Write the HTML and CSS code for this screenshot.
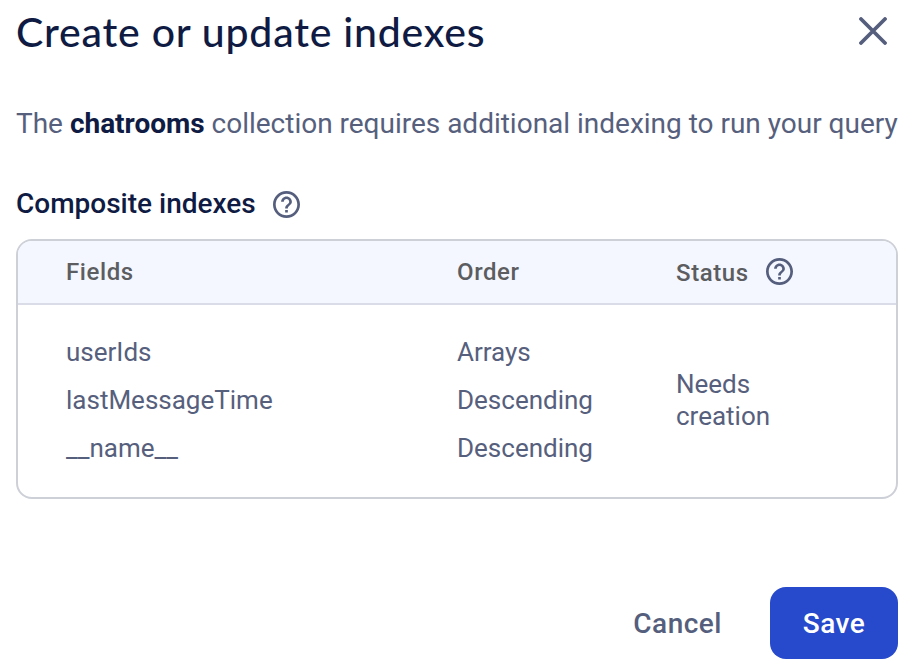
FILE: index.html
```html
<!DOCTYPE html>
<html lang="en">
<head>
<meta charset="utf-8">
<title>Create or update indexes</title>
<link rel="stylesheet" href="styles.css">
</head>
<body>
<main class="dialog">
  <header class="head">
    <h1><span>Create or update indexes</span></h1>
    <svg class="close" viewBox="0 0 28 28"><path d="M2 2l24 24M26 2l-24 24"/></svg>
  </header>
  <p class="intro">The <b>chatrooms</b> collection requires additional indexing to run your query</p>
  <h2><span>Composite indexes</span>
    <svg class="help" viewBox="2 2 20 20"><path d="M11 18h2v-2h-2v2zm1-16C6.480 2 2 6.480 2 12s4.480 10 10 10 10-4.480 10-10S17.520 2 12 2zm0 18c-4.410 0-8-3.590-8-8s3.590-8 8-8 8 3.590 8 8-3.590 8-8 8zm0-14c-2.210 0-4 1.790-4 4h2c0-1.100.9-2 2-2s2 .9 2 2c0 2-3 1.750-3 5h2c0-2.250 3-2.500 3-5 0-2.210-1.790-4-4-4z"/></svg>
  </h2>
  <section class="table">
    <div class="row thead">
      <span>Fields</span><span>Order</span>
      <span class="status-head"><span>Status</span>
        <svg class="help" viewBox="2 2 20 20"><path d="M11 18h2v-2h-2v2zm1-16C6.480 2 2 6.480 2 12s4.480 10 10 10 10-4.480 10-10S17.520 2 12 2zm0 18c-4.410 0-8-3.590-8-8s3.590-8 8-8 8 3.590 8 8-3.590 8-8 8zm0-14c-2.210 0-4 1.790-4 4h2c0-1.100.9-2 2-2s2 .9 2 2c0 2-3 1.750-3 5h2c0-2.250 3-2.500 3-5 0-2.210-1.790-4-4-4z"/></svg>
      </span>
    </div>
    <div class="row tbody">
      <div class="lines"><div>userIds</div><div>lastMessageTime</div><div>__name__</div></div>
      <div class="lines"><div>Arrays</div><div>Descending</div><div>Descending</div></div>
      <div class="status">Needs<br>creation</div>
    </div>
  </section>
  <footer class="actions">
    <button class="cancel">Cancel</button>
    <button class="save">Save</button>
  </footer>
</main>
</body>
</html>
```
FILE: styles.css
```css
* { box-sizing: border-box; }
body { margin: 0; background: #fff; font-family: Roboto, sans-serif; color: #56607d; }
.dialog { width: 916px; height: 672px; padding: 0 18px 0 16px; overflow: hidden; }
.head { display: flex; justify-content: space-between; height: 68px; }
h1 { margin: 8px 0 0; font: 500 41px/48px "Google Sans", Lato, sans-serif; letter-spacing: .78px; color: #0f1b43; white-space: nowrap; }
.close { width: 28px; height: 28px; margin: 17px 11px 0 0; fill: none; stroke: #555f7d; stroke-width: 3.8; stroke-linecap: round; }
.intro { margin: 36px 0 0; font-size: 28px; line-height: 40px; letter-spacing: -.01px; white-space: nowrap; }
.intro b { color: #0f1b43; }
h2 { display: flex; align-items: center; gap: 17.5px; margin: 40px 0 0; height: 40px; font-size: 28px; line-height: 40px; font-weight: 500; color: #0f1b43; }
.help { width: 27px; height: 27px; flex: none; fill: #555f7d; }
.table { width: 882px; height: 260px; margin-top: 15px; border: 2px solid #ced0d8; border-radius: 16px; overflow: hidden; }
.row { display: grid; grid-template-columns: 391px 219px 1fr; padding-left: 48px; }
.thead { height: 64px; align-items: center; background: #f4f7ff; border-bottom: 2px solid #dadde8; font-size: 24px; font-weight: 500; letter-spacing: .6px; color: #5c5d60; }
.status-head { display: flex; align-items: center; gap: 17px; }
.status-head span { padding-top: 2px; }
.status-head .help { margin-bottom: 2px; }
.tbody { height: 190px; align-items: center; font-size: 26px; letter-spacing: 0; }
.lines { line-height: 48px; }
.status { line-height: 32px; }
.actions { display: flex; justify-content: flex-end; gap: 48px; margin-top: 88px; }
button { border: 0; padding: 0; height: 72px; font: 500 28px Roboto, sans-serif; letter-spacing: .5px; }
.cancel { background: none; color: #555f7d; }
.save { width: 128px; border-radius: 16px; background: #2749cb; color: #fff; }
```
